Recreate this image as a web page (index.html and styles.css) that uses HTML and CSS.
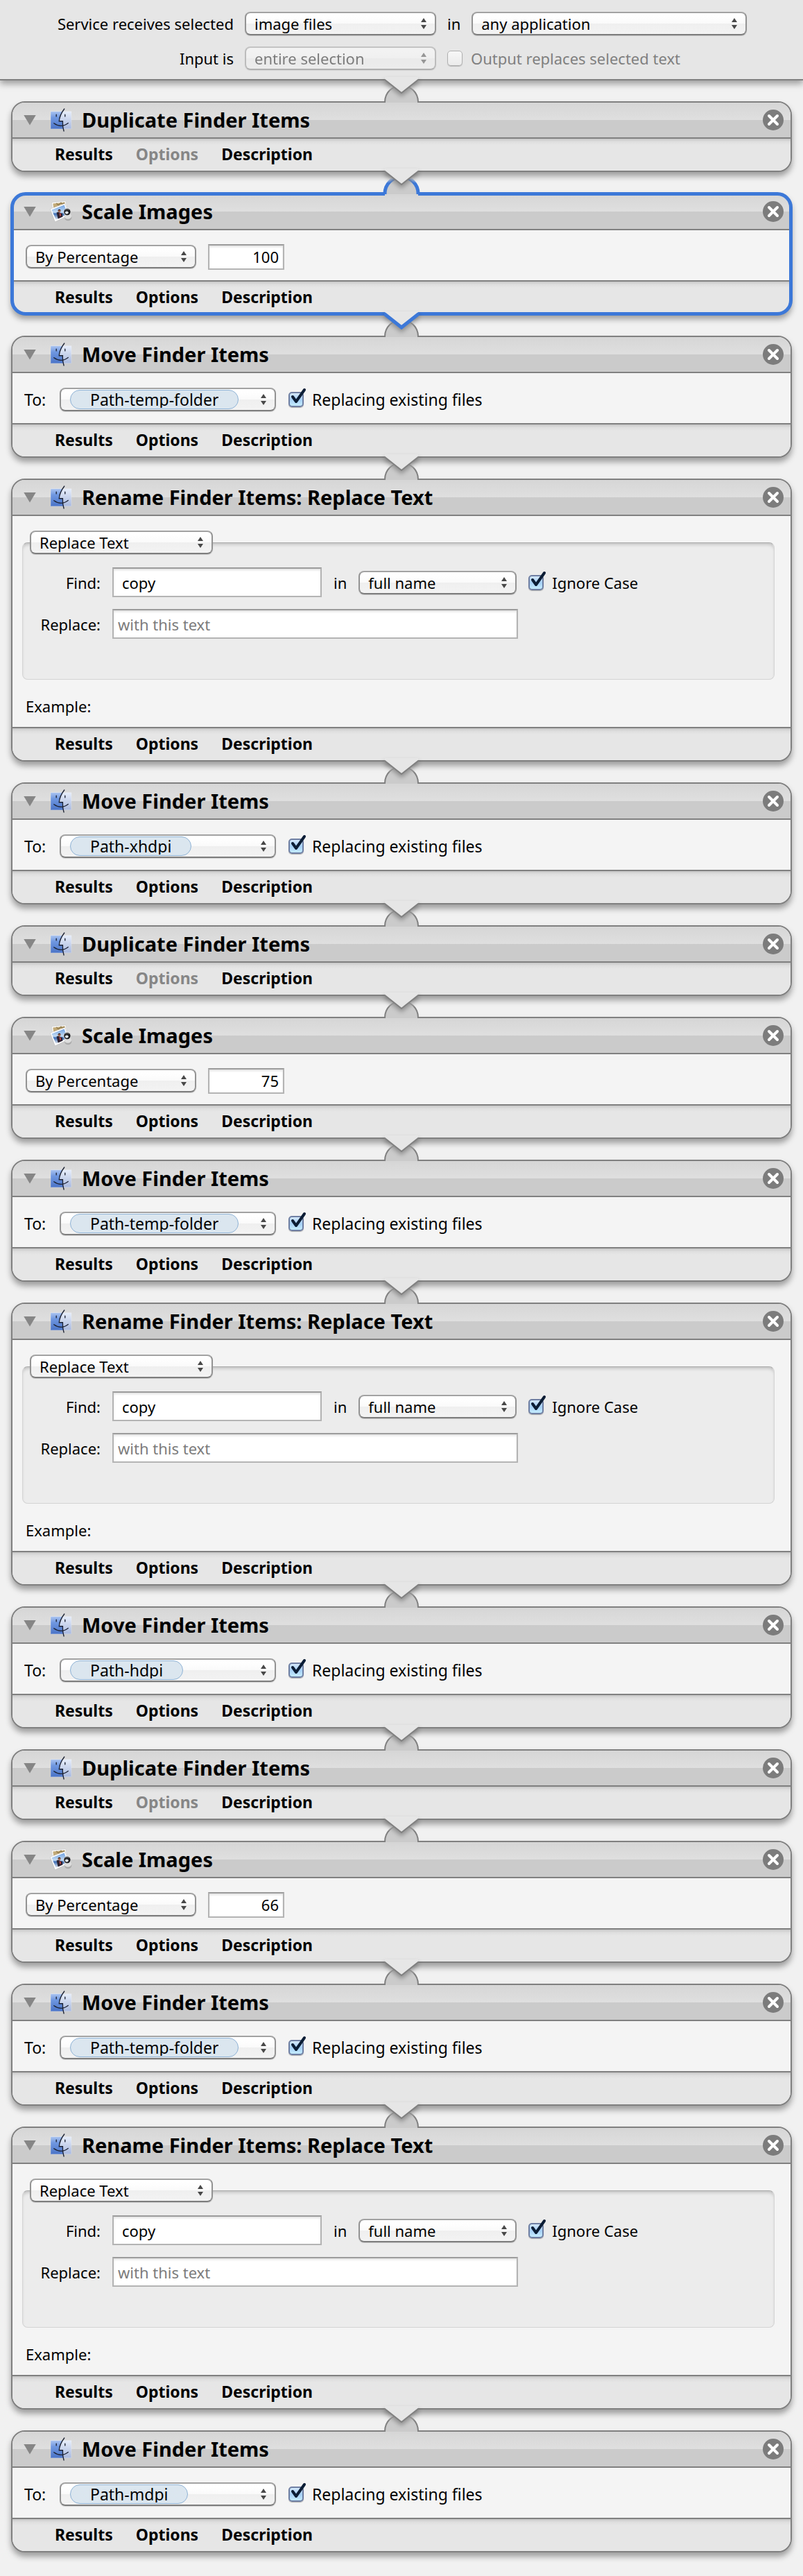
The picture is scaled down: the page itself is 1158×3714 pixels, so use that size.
FILE: index.html
```html
<!DOCTYPE html>
<html lang="en">
<head>
<meta charset="utf-8">
<title>Image service workflow</title>
<link rel="stylesheet" href="styles.css">
</head>
<body>
<svg class="defs" aria-hidden="true">
  <defs>
    <linearGradient id="finder-left" x1="0" y1="0" x2="0" y2="1"><stop offset="0" stop-color="#a9c3f0"/><stop offset=".35" stop-color="#6f97e0"/><stop offset="1" stop-color="#4a73c6"/></linearGradient>
    <linearGradient id="finder-right" x1="0" y1="0" x2="0" y2="1"><stop offset="0" stop-color="#e6edfa"/><stop offset="1" stop-color="#a9b9de"/></linearGradient>
    <linearGradient id="sky" x1="0" y1="0" x2="0" y2="1"><stop offset="0" stop-color="#6fa0e0"/><stop offset=".5" stop-color="#c4dcf4"/><stop offset=".6" stop-color="#3c6db4"/><stop offset="1" stop-color="#dfe6ee"/></linearGradient>
    <linearGradient id="bump-line" gradientUnits="userSpaceOnUse" x1="0" y1="2" x2="0" y2="10"><stop offset="0" stop-color="#808080" stop-opacity="0"/><stop offset="1" stop-color="#808080"/></linearGradient>
    <linearGradient id="bump-line-blue" gradientUnits="userSpaceOnUse" x1="0" y1="2" x2="0" y2="10"><stop offset="0" stop-color="#3c78d8" stop-opacity="0"/><stop offset="1" stop-color="#3c78d8"/></linearGradient>
  </defs>
  <symbol id="finder" viewBox="0 0 90 100">
    <rect x="1" y="14" width="88" height="74" fill="url(#finder-right)"/>
    <path d="M1 14H50Q38 34 37 54H51L54 88H1Z" fill="url(#finder-left)"/>
    <rect x="1" y="14" width="88" height="73" fill="none" stroke="#fff" stroke-opacity=".35" stroke-width="2"/>
    <path d="M59 3C46 20 38 38 37 55H52C51 70 53 84 57 97M15 64Q45 86 75 63M25 27V35M62 27V35" fill="none" stroke="#1c2233" stroke-width="4" stroke-linecap="round"/>
  </symbol>
  <symbol id="preview" viewBox="0 0 104 100">
    <path d="M8 8L74 1L80 34L14 46Z" fill="#fff" stroke="#aaa"/>
    <path d="M14 13L70 6L74 24L18 40Z" fill="#c2aa78"/>
    <path d="M30 11L40 20L52 8L60 18L66 8" fill="none" stroke="#8f7849" stroke-width="4"/>
    <path d="M1 38L70 12L92 66L24 98Z" fill="#fff" stroke="#999"/>
    <path d="M8 42L67 19L83 61L28 88Z" fill="url(#sky)"/>
    <path d="M31 55Q38 50 43 54L58 60L60 74L38 84Z" fill="#2d2230"/>
    <circle cx="44" cy="47" r="7" fill="#a26a52"/><path d="M37 45Q42 34 51 44Q44 42 37 45Z" fill="#241a1a"/>
    <path d="M44 58L50 57L52 70L46 72Z" fill="#c54a48"/>
    <ellipse cx="85" cy="78" rx="17" ry="15" fill="#aaa"/><ellipse cx="84" cy="71" rx="17" ry="14" fill="#ddd"/>
    <circle cx="81" cy="52" r="18" fill="#d9d9d9"/><circle cx="81" cy="52" r="15" fill="#17181c"/><ellipse cx="79" cy="55" rx="8" ry="7" fill="#dfe5ec"/><path d="M72 44Q80 38 89 43" stroke="#777" stroke-width="3" fill="none"/>
  </symbol>
  <symbol id="close" viewBox="0 0 30 30">
    <circle cx="15" cy="15" r="15" fill="#7c7c7c"/>
    <path d="M9 9L21 21M21 9L9 21" stroke="#fff" stroke-width="4" stroke-linecap="round"/>
  </symbol>
  <symbol id="bump" viewBox="0 0 50 26">
    <path d="M1 26V25A24 24 0 0 1 49 25V26Z" fill="#cbcbcb"/>
    <path d="M1 26H49V29H1Z" fill="#d6d6d6"/>
    <path class="bump-edge" d="M1 26V25A24 24 0 0 1 49 25V26"/>
  </symbol>
  <symbol id="arrow" viewBox="0 0 50 24">
    <path d="M1 -3H49V1L25 20L1 1Z" fill="#e6e6e6"/>
    <path class="arrow-edge" d="M0 1H1L25 20L49 1H50"/>
  </symbol>
</svg>

<header class="service">
  <div class="service-row">
    <label class="service-label" for="receives">Service receives selected</label>
    <select class="popup service-popup" id="receives"><option>image files</option></select>
    <label for="app">in</label>
    <select class="popup app-popup" id="app"><option>any application</option></select>
  </div>
  <div class="service-row">
    <label class="service-label" for="input-is">Input is</label>
    <select class="popup service-popup" id="input-is" disabled><option>entire selection</option></select>
    <label class="check disabled"><input type="checkbox" disabled>Output replaces selected text</label>
  </div>
  <svg class="arrow"><use href="#arrow"/></svg>
</header>

<main class="workflow">
  <section class="action">
    <svg class="bump"><use href="#bump"/></svg>
    <div class="title"><button class="disclosure" aria-label="Collapse"></button><svg class="icon"><use href="#finder"/></svg><h2>Duplicate Finder Items</h2><button class="close" aria-label="Remove"><svg><use href="#close"/></svg></button></div>
    <div class="tabs"><button>Results</button><button disabled>Options</button><button>Description</button></div>
    <svg class="arrow"><use href="#arrow"/></svg>
  </section>

  <section class="action selected">
    <svg class="bump"><use href="#bump"/></svg>
    <div class="title"><button class="disclosure" aria-label="Collapse"></button><svg class="icon"><use href="#preview"/></svg><h2>Scale Images</h2><button class="close" aria-label="Remove"><svg><use href="#close"/></svg></button></div>
    <div class="body scale"><select class="popup" aria-label="Scale mode"><option>By Percentage</option></select><input class="field" type="text" aria-label="Percentage" value="100"></div>
    <div class="tabs"><button>Results</button><button>Options</button><button>Description</button></div>
    <svg class="arrow"><use href="#arrow"/></svg>
  </section>

  <section class="action">
    <svg class="bump"><use href="#bump"/></svg>
    <div class="title"><button class="disclosure" aria-label="Collapse"></button><svg class="icon"><use href="#finder"/></svg><h2>Move Finder Items</h2><button class="close" aria-label="Remove"><svg><use href="#close"/></svg></button></div>
    <div class="body move"><label for="to-1">To:</label><div class="popup"><select class="token" id="to-1"><option>Path-temp-folder</option></select></div><label class="check"><input type="checkbox" checked>Replacing existing files</label></div>
    <div class="tabs"><button>Results</button><button>Options</button><button>Description</button></div>
    <svg class="arrow"><use href="#arrow"/></svg>
  </section>

  <section class="action">
    <svg class="bump"><use href="#bump"/></svg>
    <div class="title"><button class="disclosure" aria-label="Collapse"></button><svg class="icon"><use href="#finder"/></svg><h2>Rename Finder Items: Replace Text</h2><button class="close" aria-label="Remove"><svg><use href="#close"/></svg></button></div>
    <div class="body rename">
      <fieldset>
        <legend><select class="popup" aria-label="Rename mode"><option>Replace Text</option></select></legend>
        <div class="rename-row"><label class="rename-label" for="find-1">Find:</label><input class="field find" id="find-1" type="text" value="copy"><label for="part-1">in</label><select class="popup" id="part-1"><option>full name</option></select><label class="check"><input type="checkbox" checked>Ignore Case</label></div>
        <div class="rename-row"><label class="rename-label" for="with-1">Replace:</label><input class="field replace" id="with-1" type="text" placeholder="with this text"></div>
      </fieldset>
      <p>Example:</p>
    </div>
    <div class="tabs"><button>Results</button><button>Options</button><button>Description</button></div>
    <svg class="arrow"><use href="#arrow"/></svg>
  </section>

  <section class="action">
    <svg class="bump"><use href="#bump"/></svg>
    <div class="title"><button class="disclosure" aria-label="Collapse"></button><svg class="icon"><use href="#finder"/></svg><h2>Move Finder Items</h2><button class="close" aria-label="Remove"><svg><use href="#close"/></svg></button></div>
    <div class="body move"><label for="to-2">To:</label><div class="popup"><select class="token" id="to-2"><option>Path-xhdpi</option></select></div><label class="check"><input type="checkbox" checked>Replacing existing files</label></div>
    <div class="tabs"><button>Results</button><button>Options</button><button>Description</button></div>
    <svg class="arrow"><use href="#arrow"/></svg>
  </section>

  <section class="action">
    <svg class="bump"><use href="#bump"/></svg>
    <div class="title"><button class="disclosure" aria-label="Collapse"></button><svg class="icon"><use href="#finder"/></svg><h2>Duplicate Finder Items</h2><button class="close" aria-label="Remove"><svg><use href="#close"/></svg></button></div>
    <div class="tabs"><button>Results</button><button disabled>Options</button><button>Description</button></div>
    <svg class="arrow"><use href="#arrow"/></svg>
  </section>

  <section class="action">
    <svg class="bump"><use href="#bump"/></svg>
    <div class="title"><button class="disclosure" aria-label="Collapse"></button><svg class="icon"><use href="#preview"/></svg><h2>Scale Images</h2><button class="close" aria-label="Remove"><svg><use href="#close"/></svg></button></div>
    <div class="body scale"><select class="popup" aria-label="Scale mode"><option>By Percentage</option></select><input class="field" type="text" aria-label="Percentage" value="75"></div>
    <div class="tabs"><button>Results</button><button>Options</button><button>Description</button></div>
    <svg class="arrow"><use href="#arrow"/></svg>
  </section>

  <section class="action">
    <svg class="bump"><use href="#bump"/></svg>
    <div class="title"><button class="disclosure" aria-label="Collapse"></button><svg class="icon"><use href="#finder"/></svg><h2>Move Finder Items</h2><button class="close" aria-label="Remove"><svg><use href="#close"/></svg></button></div>
    <div class="body move"><label for="to-3">To:</label><div class="popup"><select class="token" id="to-3"><option>Path-temp-folder</option></select></div><label class="check"><input type="checkbox" checked>Replacing existing files</label></div>
    <div class="tabs"><button>Results</button><button>Options</button><button>Description</button></div>
    <svg class="arrow"><use href="#arrow"/></svg>
  </section>

  <section class="action">
    <svg class="bump"><use href="#bump"/></svg>
    <div class="title"><button class="disclosure" aria-label="Collapse"></button><svg class="icon"><use href="#finder"/></svg><h2>Rename Finder Items: Replace Text</h2><button class="close" aria-label="Remove"><svg><use href="#close"/></svg></button></div>
    <div class="body rename">
      <fieldset>
        <legend><select class="popup" aria-label="Rename mode"><option>Replace Text</option></select></legend>
        <div class="rename-row"><label class="rename-label" for="find-2">Find:</label><input class="field find" id="find-2" type="text" value="copy"><label for="part-2">in</label><select class="popup" id="part-2"><option>full name</option></select><label class="check"><input type="checkbox" checked>Ignore Case</label></div>
        <div class="rename-row"><label class="rename-label" for="with-2">Replace:</label><input class="field replace" id="with-2" type="text" placeholder="with this text"></div>
      </fieldset>
      <p>Example:</p>
    </div>
    <div class="tabs"><button>Results</button><button>Options</button><button>Description</button></div>
    <svg class="arrow"><use href="#arrow"/></svg>
  </section>

  <section class="action">
    <svg class="bump"><use href="#bump"/></svg>
    <div class="title"><button class="disclosure" aria-label="Collapse"></button><svg class="icon"><use href="#finder"/></svg><h2>Move Finder Items</h2><button class="close" aria-label="Remove"><svg><use href="#close"/></svg></button></div>
    <div class="body move"><label for="to-4">To:</label><div class="popup"><select class="token" id="to-4"><option>Path-hdpi</option></select></div><label class="check"><input type="checkbox" checked>Replacing existing files</label></div>
    <div class="tabs"><button>Results</button><button>Options</button><button>Description</button></div>
    <svg class="arrow"><use href="#arrow"/></svg>
  </section>

  <section class="action">
    <svg class="bump"><use href="#bump"/></svg>
    <div class="title"><button class="disclosure" aria-label="Collapse"></button><svg class="icon"><use href="#finder"/></svg><h2>Duplicate Finder Items</h2><button class="close" aria-label="Remove"><svg><use href="#close"/></svg></button></div>
    <div class="tabs"><button>Results</button><button disabled>Options</button><button>Description</button></div>
    <svg class="arrow"><use href="#arrow"/></svg>
  </section>

  <section class="action">
    <svg class="bump"><use href="#bump"/></svg>
    <div class="title"><button class="disclosure" aria-label="Collapse"></button><svg class="icon"><use href="#preview"/></svg><h2>Scale Images</h2><button class="close" aria-label="Remove"><svg><use href="#close"/></svg></button></div>
    <div class="body scale"><select class="popup" aria-label="Scale mode"><option>By Percentage</option></select><input class="field" type="text" aria-label="Percentage" value="66"></div>
    <div class="tabs"><button>Results</button><button>Options</button><button>Description</button></div>
    <svg class="arrow"><use href="#arrow"/></svg>
  </section>

  <section class="action">
    <svg class="bump"><use href="#bump"/></svg>
    <div class="title"><button class="disclosure" aria-label="Collapse"></button><svg class="icon"><use href="#finder"/></svg><h2>Move Finder Items</h2><button class="close" aria-label="Remove"><svg><use href="#close"/></svg></button></div>
    <div class="body move"><label for="to-5">To:</label><div class="popup"><select class="token" id="to-5"><option>Path-temp-folder</option></select></div><label class="check"><input type="checkbox" checked>Replacing existing files</label></div>
    <div class="tabs"><button>Results</button><button>Options</button><button>Description</button></div>
    <svg class="arrow"><use href="#arrow"/></svg>
  </section>

  <section class="action">
    <svg class="bump"><use href="#bump"/></svg>
    <div class="title"><button class="disclosure" aria-label="Collapse"></button><svg class="icon"><use href="#finder"/></svg><h2>Rename Finder Items: Replace Text</h2><button class="close" aria-label="Remove"><svg><use href="#close"/></svg></button></div>
    <div class="body rename">
      <fieldset>
        <legend><select class="popup" aria-label="Rename mode"><option>Replace Text</option></select></legend>
        <div class="rename-row"><label class="rename-label" for="find-3">Find:</label><input class="field find" id="find-3" type="text" value="copy"><label for="part-3">in</label><select class="popup" id="part-3"><option>full name</option></select><label class="check"><input type="checkbox" checked>Ignore Case</label></div>
        <div class="rename-row"><label class="rename-label" for="with-3">Replace:</label><input class="field replace" id="with-3" type="text" placeholder="with this text"></div>
      </fieldset>
      <p>Example:</p>
    </div>
    <div class="tabs"><button>Results</button><button>Options</button><button>Description</button></div>
    <svg class="arrow"><use href="#arrow"/></svg>
  </section>

  <section class="action">
    <svg class="bump"><use href="#bump"/></svg>
    <div class="title"><button class="disclosure" aria-label="Collapse"></button><svg class="icon"><use href="#finder"/></svg><h2>Move Finder Items</h2><button class="close" aria-label="Remove"><svg><use href="#close"/></svg></button></div>
    <div class="body move"><label for="to-6">To:</label><div class="popup"><select class="token" id="to-6"><option>Path-mdpi</option></select></div><label class="check"><input type="checkbox" checked>Replacing existing files</label></div>
    <div class="tabs"><button>Results</button><button>Options</button><button>Description</button></div>
  </section>
</main>
</body>
</html>
```
FILE: styles.css
```css
:root {
  --line: #808080;
  --blue: #3c78d8;
  --edge: var(--line);
  --edge-width: 2px;
  --bump-paint: url(#bump-line);
}

* { box-sizing: border-box; }

body {
  margin: 0;
  background: #f1f1f1;
  color: #000;
  font: 22px/28px "Noto Sans", "Open Sans", sans-serif;
}

h2, p { margin: 0; }

button, input, select { font: inherit; color: inherit; margin: 0; }
button { border: 0; padding: 0; background: none; }

.defs { position: absolute; width: 0; height: 0; }

/* Service settings */
.service {
  position: relative;
  display: flex;
  flex-direction: column;
  gap: 16px;
  padding: 17px 0 13px;
  background: #e6e6e6;
  border-bottom: 2px solid var(--line);
  box-shadow: 0 5px 9px rgba(0, 0, 0, .35);
}
.service-row { display: flex; align-items: center; gap: 16px; }
.service-label { width: 337px; text-align: right; }
.service-popup { width: 276px; }
.app-popup { width: 397px; }

/* Pop-up buttons */
.popup {
  appearance: none;
  height: 34px;
  padding: 0 32px 0 12px;
  border: 2px solid #999;
  border-color: #a2a2a2 #939393 #7d7d7d;
  border-radius: 8px;
  box-shadow: 0 1px 1px rgba(0, 0, 0, .15);
  line-height: 28px;
  background:
    url("data:image/svg+xml,%3Csvg xmlns='http://www.w3.org/2000/svg' width='10' height='18'%3E%3Cpath d='M5 1L9 7H1ZM5 17L9 11H1Z' fill='%23484848'/%3E%3C/svg%3E") no-repeat right 11px center,
    linear-gradient(#fff 0 10%, #fafafa 50%, #efefef 50%, #f3f3f3);
}
.popup:disabled { opacity: .5; color: #111; }

.token {
  appearance: none;
  field-sizing: content;
  display: block;
  height: 28px;
  margin-top: 1px;
  padding: 0 28px;
  border: 1px solid #8fb3d6;
  border-radius: 14px;
  background: #dbe6ef;
  line-height: 24px;
}

/* Check boxes */
.check { display: flex; align-items: center; gap: 12px; }
.check input {
  appearance: none;
  position: relative;
  width: 22px;
  height: 22px;
  border: 1px solid #9a9a9a;
  border-radius: 5px;
  background: linear-gradient(#fff, #eee);
  box-shadow: 0 1px 1px rgba(0, 0, 0, .3);
}
.check input:checked {
  border: 2px solid #6f7fa3;
  background: linear-gradient(#d4e8fa, #a5cff5 50%, #c4ecff);
}
.check input:checked::after {
  content: "";
  position: absolute;
  left: 0;
  top: -8px;
  width: 26px;
  height: 26px;
  background: url("data:image/svg+xml,%3Csvg xmlns='http://www.w3.org/2000/svg' width='26' height='26'%3E%3Cpath d='M4 13L9 20L21 3' fill='none' stroke='%230b1d35' stroke-width='4' stroke-linecap='round' stroke-linejoin='round'/%3E%3C/svg%3E");
}
.check.disabled { color: #808080; }
.check input:disabled { opacity: .7; }

/* Text fields */
.field {
  border: 2px solid #b4b4b4;
  border-top-color: #9c9c9c;
  background: #fff;
  box-shadow: inset 0 2px 3px rgba(0, 0, 0, .12);
}
.field::placeholder { color: #7c7c7c; opacity: 1; }

/* Actions */
.workflow {
  display: flex;
  flex-direction: column;
  gap: 30px;
  padding: 30px 16px 34px;
}
.action {
  position: relative;
  border: 2px solid var(--line);
  border-radius: 20px;
  background: #f4f4f4;
  box-shadow: 0 6px 9px rgba(0, 0, 0, .35);
}
.selected { --edge: var(--blue); --edge-width: 5px; --bump-paint: url(#bump-line-blue); }
.selected::after {
  content: "";
  position: absolute;
  inset: -3px;
  border: 5px solid var(--blue);
  border-radius: 22px;
  pointer-events: none;
}

.bump, .arrow { position: absolute; left: calc(50% - 25px); width: 50px; overflow: visible; }
.bump { top: -26px; height: 26px; z-index: 1; }
.arrow { top: 100%; height: 24px; z-index: 2; filter: drop-shadow(0 4px 3px rgba(0, 0, 0, .3)); }
#bump, #arrow { overflow: visible; }
.bump-edge { fill: none; stroke: var(--bump-paint); stroke-width: var(--edge-width); }
.arrow-edge { fill: none; stroke: var(--edge); stroke-width: var(--edge-width); }

.title {
  display: flex;
  align-items: center;
  height: 52px;
  padding: 0 10px 0 16px;
  border-bottom: 2px solid var(--line);
  border-radius: 18px 18px 0 0;
  background: linear-gradient(#d6d6d6, #dfdfdf 50%, #cbcbcb 50%);
}
.title h2 { flex: 1; font-size: 29px; line-height: 36px; font-weight: 700; }
.disclosure {
  width: 18px;
  height: 15px;
  background: #868686;
  clip-path: polygon(0 0, 100% 0, 50% 100%);
}
.icon { width: 32px; height: 34px; margin: 0 14px 0 20px; }
.close, .close svg { display: block; width: 30px; height: 30px; }

.body { border-bottom: 2px solid var(--line); }
.scale, .move { display: flex; align-items: center; height: 74px; padding-top: 4px; }
.scale { gap: 17px; padding-left: 19px; }
.scale .popup { width: 246px; }
.scale .field { width: 110px; height: 37px; padding: 0 6px; text-align: right; }
.move { gap: 18px; padding-left: 17px; font-size: 23px; }
.move > label:first-child { width: 33px; }
.move .popup { width: 312px; padding-left: 13px; }

.rename { padding: 21px 23px 16px 14px; }
.rename fieldset {
  display: flex;
  flex-direction: column;
  gap: 17px;
  min-height: 215px;
  margin: 0;
  padding: 19px 0 0;
  border: 1px solid #d4d4d4;
  border-top-color: #aaa;
  border-radius: 8px;
  background: #ececec;
  box-shadow: inset 0 4px 5px -2px rgba(0, 0, 0, .2);
}
.rename legend { display: block; height: 34px; margin-left: 10px; padding: 0; }
.rename legend .popup { display: block; width: 264px; }
.rename-row { display: flex; align-items: center; gap: 17px; }
.rename-label { width: 112px; text-align: right; }
.rename-row .popup { width: 228px; }
.rename .field { height: 43px; }
.find { width: 302px; padding: 0 12px; }
.replace { width: 585px; padding: 0 6px; }
.rename p { margin-top: 24px; padding-left: 5px; }

.tabs {
  display: flex;
  align-items: center;
  gap: 33px;
  height: 46px;
  padding: 0 0 3px 61px;
  border-radius: 0 0 18px 18px;
  background: linear-gradient(#c6c6c6, #dedede 4px, #e6e6e6 9px);
}
.tabs button { font-size: 23px; font-weight: 700; }
.tabs button:disabled { color: #868686; }
```
